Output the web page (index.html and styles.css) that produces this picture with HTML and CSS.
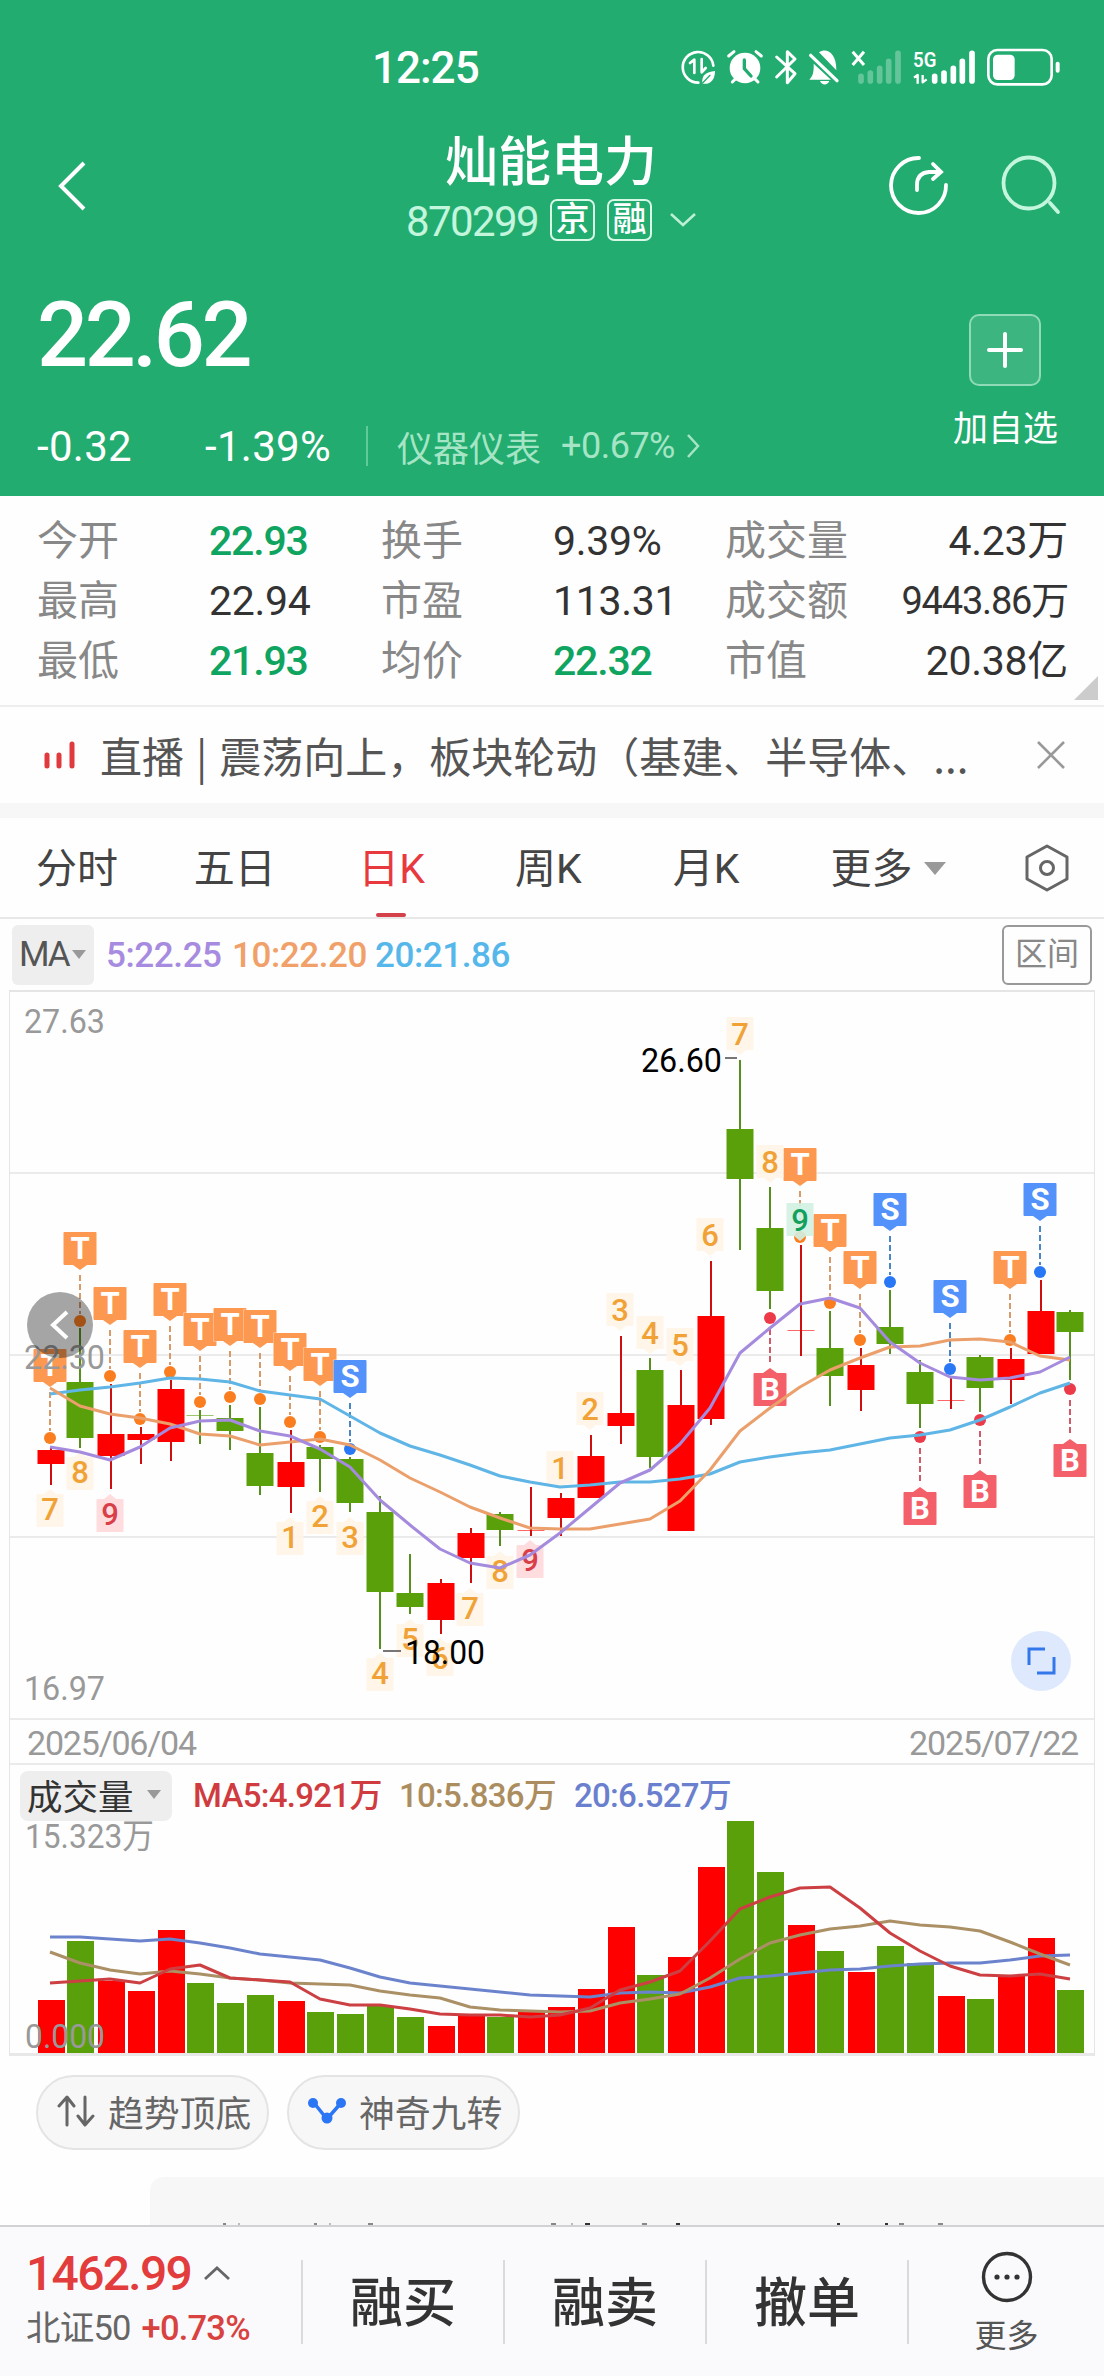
FILE: index.html
```html
<!DOCTYPE html>
<html lang="zh-CN">

<head>
    <meta charset="UTF-8">
    <meta name="viewport" content="width=device-width, initial-scale=1.0">
    <title>灿能电力 870299</title>
    <link rel="stylesheet" href="styles.css">
</head>

<body>

    <!-- Header -->
    <header class="header">
        <div class="status-bar">
            <span class="time">12:25</span>
            <svg class="status-icons" width="400" height="50" viewBox="0 40 1200 150" fill="none" stroke="#fff" stroke-linecap="round" stroke-linejoin="round">
                <!-- data saver -->
                <path d="M85 159A46 46 0 1 1 130 108" stroke-width="8" />
                <path d="M60 100l13-10v40M95 88v40l12-13" stroke-width="8" />
                <path d="M97 162C94 136 108 127 135 124C135 150 122 166 97 162Z" fill="#fff" stroke="none" />
                <path d="M98 160l22-23" stroke="#22ac70" stroke-width="4" />
                <!-- alarm -->
                <circle cx="225" cy="115" r="46" fill="#fff" stroke="none" />
                <path d="M176 79l16-13M274 79l-16-13M187 157l10-10M264 157l-10-10" stroke-width="9" />
                <path d="M223 91v26l20 22" stroke="#22ac70" stroke-width="10" />
                <!-- bluetooth -->
                <path d="M320 82l55 50-23 27V66l23 22-55 54" stroke-width="9" />
                <!-- muted bell -->
                <path d="M447 68C470 53 500 70 499 122ZM431 102L483 150H418C429 139 432 126 431 102ZM450 154H478C473 168 455 168 450 154Z" fill="#fff" stroke="none" />
                <path d="M431 71l80 77" stroke="#22ac70" stroke-width="7" />
                <path d="M422 77l79 76" stroke-width="10" />
                <!-- sim 1 -->
                <path d="M548 66l34 40M582 66l-34 40" stroke-width="9" stroke-linecap="butt" />
                <g stroke-width="17" opacity="0.3">
                    <path d="M573 140v14M601 130v24M629 116v38M656 95v59M684 71v83" />
                </g>
                <!-- sim 2 -->
                <text x="729" y="111" class="net" textLength="70" lengthAdjust="spacingAndGlyphs">5G</text>
                <path d="M732 144l11-8v26M758 136v22l12-9" stroke-width="7" stroke-linecap="butt" />
                <path d="M794 140v14M822 130v24M850 116v38M877 95v59M906 71v83" stroke-width="17" />
                <!-- battery -->
                <rect x="955" y="61" width="190" height="103" rx="27" stroke-width="8" />
                <rect x="969" y="75" width="65" height="76" rx="14" fill="#fff" stroke="none" />
                <path d="M1163 102v21" stroke-width="12" />
            </svg>
        </div>

        <div class="title-bar">
            <svg class="back" width="28" height="50" viewBox="0 0 28 50" fill="none" stroke="#fff" stroke-width="4">
                <path d="M26 2L3 25l23 23" />
            </svg>
            <div class="title">
                <h1>灿能电力</h1>
                <div class="code">
                    <span class="code-num">870299</span>
                    <span class="tag">京</span>
                    <span class="tag">融</span>
                    <svg width="26" height="16" viewBox="0 0 26 16" fill="none" stroke="#bdf0d6" stroke-width="2.5">
                        <path d="M1 2l12 11L25 2" />
                    </svg>
                </div>
            </div>
            <div class="actions">
                <svg width="62" height="62" viewBox="0 0 62 62" fill="none" stroke="#fff" stroke-width="3.8" stroke-linecap="round">
                    <path d="M32 4A27.5 27.5 0 1 0 59 31" />
                    <path d="M30 36v-5q0-12 12-13h12M46 10l8 8-8 7" />
                </svg>
                <svg width="62" height="62" viewBox="0 0 62 62" fill="none" stroke="#c4f5dd" stroke-width="3.8" stroke-linecap="round">
                    <circle cx="29" cy="29" r="25.5" />
                    <path d="M50 49l8 9" />
                </svg>
            </div>
        </div>

        <div class="quote">
            <div class="quote-left">
                <div class="price">22.62</div>
                <div class="change">
                    <span class="diff">-0.32</span>
                    <span class="percent">-1.39%</span>
                    <span class="industry">仪器仪表</span>
                    <span class="industry-percent">+0.67%</span>
                    <svg width="13" height="24" viewBox="0 0 13 24" fill="none" stroke="#a5e5c5" stroke-width="2.5">
                        <path d="M1 1l10 11L1 23" />
                    </svg>
                </div>
            </div>
            <div class="add">
                <div class="add-box">
                    <svg width="36" height="36" viewBox="0 0 36 36" stroke="#fff" stroke-width="4" stroke-linecap="round">
                        <path d="M2 18h32M18 2v32" />
                    </svg>
                </div>
                <span>加自选</span>
            </div>
        </div>
    </header>

    <!-- Key figures -->
    <section class="stats">
        <span class="label">今开</span><span class="value green">22.93</span>
        <span class="label">换手</span><span class="value">9.39%</span>
        <span class="label">成交量</span><span class="value right">4.23万</span>
        <span class="label">最高</span><span class="value">22.94</span>
        <span class="label">市盈</span><span class="value">113.31</span>
        <span class="label">成交额</span><span class="value right small">9443.86万</span>
        <span class="label">最低</span><span class="value green">21.93</span>
        <span class="label">均价</span><span class="value green">22.32</span>
        <span class="label">市值</span><span class="value right">20.38亿</span>
        <i class="corner"></i>
    </section>

    <!-- Live banner -->
    <section class="live">
        <svg width="32" height="30" viewBox="0 0 32 30" stroke="#e0393e" stroke-width="5" stroke-linecap="round">
            <path d="M3 15v11M15 15v11M28 4v22" />
        </svg>
        <p>直播<span class="bar">|</span>震荡向上，板块轮动（基建、半导体、...</p>
        <svg width="28" height="28" viewBox="0 0 28 28" stroke="#999" stroke-width="2.6">
            <path d="M1 1l26 26M27 1L1 27" />
        </svg>
    </section>

    <!-- Period tabs -->
    <nav class="tabs">
        <span class="tab">分时</span>
        <span class="tab">五日</span>
        <span class="tab active">日K</span>
        <span class="tab">周K</span>
        <span class="tab">月K</span>
        <span class="tab more">更多<i class="arrow"></i></span>
        <svg width="44" height="48" viewBox="0 0 44 48" fill="none" stroke="#666" stroke-width="3" stroke-linejoin="round">
            <path d="M22 2l20 11v22L22 46 2 35V13Z" />
            <circle cx="22" cy="24" r="6.5" />
        </svg>
    </nav>

    <div class="ma-row">
        <span class="ma-select">MA<i class="arrow small"></i></span>
        <span class="ma5">5:22.25</span>
        <span class="ma10">10:22.20</span>
        <span class="ma20">20:21.86</span>
        <span class="range">区间</span>
    </div>

    <!-- Charts -->
    <section class="chart">
        <svg id="k-chart" width="1084" height="726" viewBox="10 992 1084 726"></svg>
        <div class="dates">
            <span>2025/06/04</span>
            <span>2025/07/22</span>
        </div>
        <div class="vol-head">
            <span class="vol-select">成交量<i class="arrow small"></i></span>
            <span class="vol5">MA5:4.921万</span>
            <span class="vol10">10:5.836万</span>
            <span class="vol20">20:6.527万</span>
        </div>
        <svg id="vol-chart" width="1084" height="235" viewBox="10 1818 1084 235"></svg>
    </section>

    <div class="chips">
        <span class="chip">
            <svg width="38" height="32" viewBox="0 0 38 32" fill="none" stroke="#666" stroke-width="3" stroke-linecap="round" stroke-linejoin="round">
                <path d="M10 30V3M2 11l8-9 7 9M28 2v27M21 21l7 9 8-9" />
            </svg>
            趋势顶底
        </span>
        <span class="chip">
            <svg width="38" height="28" viewBox="0 0 38 28" fill="#2a76f5" stroke="#2a76f5" stroke-width="3.5">
                <path d="M6 6l13 16L33 6" fill="none" />
                <g stroke="none">
                    <circle cx="5" cy="6" r="5" />
                    <circle cx="19" cy="21" r="5.5" />
                    <circle cx="33" cy="6" r="5" />
                </g>
            </svg>
            神奇九转
        </span>
    </div>

    <div class="news">
        <svg width="954" height="3" viewBox="150 0 954 3" stroke="#888" stroke-width="2">
            <path d="M223 2h3M314 2h3M368 2h5M551 2h5M642 2h5M899 2h5M938 2h5" />
            <path d="M585 2h5M676 2h4M837 2h3M885 2h3" stroke="#333" />
            <path d="M238 2h2M329 2h2M571 2h2" stroke="#bbb" />
        </svg>
    </div>

    <!-- Bottom bar -->
    <footer class="bottom">
        <div class="index">
            <div class="index-price">1462.99
                <svg width="26" height="15" viewBox="0 0 26 15" fill="none" stroke="#666" stroke-width="2.8">
                    <path d="M1 13L13 2l12 11" />
                </svg>
            </div>
            <div class="index-name">北证50<span>+0.73%</span></div>
        </div>
        <div class="trade">融买</div>
        <div class="trade">融卖</div>
        <div class="trade">撤单</div>
        <div class="bottom-more">
            <svg width="52" height="52" viewBox="0 0 52 52">
                <circle cx="26" cy="26" r="23.5" fill="none" stroke="#333" stroke-width="3.4" />
                <g fill="#333">
                    <circle cx="16" cy="26" r="2.6" />
                    <circle cx="26" cy="26" r="2.6" />
                    <circle cx="36" cy="26" r="2.6" />
                </g>
            </svg>
            <span>更多</span>
        </div>
    </footer>

    <script src="chart.js"></script>
</body>

</html>
```
FILE: styles.css
```css
* {
    margin: 0;
    padding: 0;
    box-sizing: border-box;
}

body {
    width: 1104px;
    height: 2376px;
    overflow: hidden;
    font-family: Roboto, "Noto Sans CJK SC", sans-serif;
    background: #fefefe;
    color: #333;
}

svg {
    display: block;
    flex-shrink: 0;
}

/* Header */
.header {
    height: 496px;
    background: #22ac70;
    color: white;
}

.status-bar {
    display: flex;
    height: 132px;
    padding-top: 43px;
    padding-left: 372px;
}

.time {
    width: 298px;
    font-size: 44px;
    line-height: 51px;
    letter-spacing: -1px;
    font-weight: 500;
}

.net {
    font-size: 62px;
    font-weight: 600;
    fill: white;
    stroke: none;
}

.title-bar {
    display: flex;
    height: 142px;
}

.back {
    margin: 29px 0 0 58px;
}

.title {
    width: 670px;
    margin-left: 130px;
    text-align: center;
}

.title h1 {
    font-size: 53px;
    font-weight: 500;
    line-height: 62px;
}

.code {
    display: flex;
    align-items: center;
    justify-content: center;
    height: 50px;
    margin-top: 1px;
    gap: 12px;
}

.code-num {
    padding-top: 3px;
    font-size: 42px;
    letter-spacing: -1.6px;
    color: #c4f5dd;
}

.tag {
    width: 45px;
    height: 42px;
    border: 2px solid #d8f8e8;
    border-radius: 7px;
    font-size: 34px;
    font-weight: 500;
    line-height: 37px;
}

.code svg {
    margin-left: 6px;
}

.actions {
    display: flex;
    gap: 51px;
    margin-top: 22px;
    margin-left: 1px;
}

.quote {
    display: flex;
    justify-content: space-between;
    padding: 0 46px 0 37px;
}

.price {
    height: 122px;
    font-size: 90px;
    font-weight: 500;
    line-height: 124px;
    letter-spacing: -3.5px;
}

.change {
    display: flex;
    align-items: center;
    height: 42px;
    margin-top: 29px;
    font-size: 42px;
    letter-spacing: 0.3px;
}

.diff {
    width: 168px;
}

.percent {
    width: 163px;
    height: 40px;
    line-height: 42px;
    border-right: 2px solid #5fcb98;
}

.industry {
    width: 193px;
    padding-left: 29px;
    font-size: 36px;
    letter-spacing: 0;
    color: #a5e5c5;
    white-space: nowrap;
}

.industry-percent {
    width: 126px;
    font-size: 36px;
    letter-spacing: -0.5px;
    color: #a5e5c5;
}

.add {
    display: flex;
    flex-direction: column;
    align-items: center;
    padding-top: 40px;
    font-size: 35px;
    line-height: 50px;
}

.add-box {
    display: flex;
    align-items: center;
    justify-content: center;
    width: 72px;
    height: 72px;
    margin-bottom: 19px;
    border: 2px solid #90dbb7;
    border-radius: 10px;
    background: #3cb580;
}

/* Key figures */
.stats {
    position: relative;
    display: grid;
    grid-template-columns: 172px 172px 172px 172px 140px 1fr;
    grid-auto-rows: 60px;
    height: 211px;
    padding: 15px 36px 0 37px;
    border-bottom: 2px solid #eee;
    font-size: 41px;
    line-height: 60px;
    white-space: nowrap;
}

.label {
    color: #888;
}

.value {
    letter-spacing: -0.3px;
}

.right {
    text-align: right;
}

.small {
    font-size: 38px;
    letter-spacing: -1.2px;
}

.green {
    color: #0fa460;
    font-weight: 500;
    letter-spacing: -1.2px;
}

.corner {
    position: absolute;
    right: 6px;
    bottom: 5px;
    border-left: 24px solid transparent;
    border-bottom: 24px solid #ccc;
}

/* Live banner */
.live {
    display: flex;
    align-items: center;
    height: 96px;
    padding: 0 39px 0 44px;
    color: #555;
}

.live p {
    flex: 1;
    margin-left: 24px;
    font-size: 42px;
    line-height: 60px;
    white-space: nowrap;
    font-family: "Noto Sans CJK SC", sans-serif;
}

.live .bar {
    margin: 0 12px;
}

/* Tabs */
.tabs {
    display: flex;
    align-items: center;
    height: 116px;
    padding: 0 35px 0 36px;
    border-top: 15px solid #f7f7f7;
    border-bottom: 2px solid #e8e8e8;
    font-size: 41px;
    color: #444;
}

.tab {
    position: relative;
    width: 158px;
    padding-top: 2px;
    line-height: 60px;
    white-space: nowrap;
}

.tab:nth-child(2) {
    width: 165px;
}

.tab:nth-child(3) {
    width: 157px;
}

.tab.active {
    color: #e8393f;
}

.tab.active::after {
    content: "";
    position: absolute;
    left: 18px;
    bottom: -18px;
    width: 30px;
    height: 4px;
    border-radius: 2px;
    background: #d5414a;
}

.tab.more {
    display: flex;
    align-items: center;
    width: 195px;
}

.arrow {
    margin-left: 12px;
    border: 11px solid transparent;
    border-top: 13px solid #999;
    border-bottom: 0;
}

.arrow.small {
    margin-left: 3px;
    border-width: 9px 7px 0;
}

.ma-row {
    display: flex;
    align-items: center;
    height: 71px;
    padding: 0 12px;
    font-size: 35px;
    letter-spacing: 0;
}

.ma-select {
    display: flex;
    align-items: center;
    width: 82px;
    height: 60px;
    padding-left: 7px;
    border-radius: 6px;
    background: #eee;
    color: #555;
    letter-spacing: -2px;
}

.ma5 {
    width: 126px;
    margin-left: 12px;
    color: #a78be0;
}

.ma10 {
    width: 143px;
    color: #f0a068;
}

.ma20 {
    flex: 1;
    color: #55b7ea;
}

.ma5,
.ma10,
.ma20 {
    padding-top: 2px;
    font-weight: 500;
    letter-spacing: -0.4px;
}

.range {
    width: 90px;
    height: 60px;
    border: 2px solid #999;
    border-radius: 6px;
    font-size: 32px;
    line-height: 55px;
    text-align: center;
    color: #888;
}

/* Charts */
.chart {
    margin: 0 9px;
    border: 1px solid #e5e5e5;
    border-top-width: 2px;
    border-bottom: 3px solid #e8e8e8;
}

.dates {
    display: flex;
    justify-content: space-between;
    height: 47px;
    padding: 0 16px 0 17px;
    border-top: 2px solid #ebebeb;
    border-bottom: 2px solid #ebebeb;
    font-size: 34px;
    line-height: 46px;
    letter-spacing: -1.2px;
    color: #999;
}

.vol-head {
    display: flex;
    align-items: center;
    height: 53px;
    padding: 8px 0 0 10px;
    font-size: 33px;
    letter-spacing: -0.6px;
    white-space: nowrap;
}

.vol-select {
    display: flex;
    align-items: center;
    width: 152px;
    height: 50px;
    margin-right: 21px;
    padding: 0 0 2px 7px;
    border-radius: 8px;
    background: #eee;
    font-size: 35.5px;
    letter-spacing: 0;
}

.vol-select .arrow {
    margin-left: 13px;
}

.vol5,
.vol10,
.vol20 {
    padding-bottom: 6px;
    font-weight: 500;
    letter-spacing: -0.7px;
}

.vol5 {
    width: 206px;
    color: #d03b3f;
}

.vol10 {
    width: 175px;
    color: #ab8d60;
}

.vol20 {
    color: #6a80cf;
}

.axis {
    font-size: 34px;
    fill: #999;
}

.mark {
    font-size: 33px;
    fill: black;
}

.flag {
    font-size: 31px;
    font-weight: 700;
    fill: white;
    text-anchor: middle;
}

.nine {
    font-size: 31px;
    font-weight: 500;
    text-anchor: middle;
}

.line {
    fill: none;
    stroke-width: 3;
    stroke-linejoin: round;
}

/* Chips and news card */
.chips {
    display: flex;
    gap: 18px;
    height: 121px;
    padding: 19px 0 0 36px;
}

.chip {
    display: flex;
    align-items: center;
    gap: 13px;
    width: 233px;
    height: 75px;
    padding: 0 0 4px 19px;
    border: 2px solid #e4e4e4;
    border-radius: 38px;
    background: #f7f7f7;
    font-size: 35.8px;
    color: #666;
    white-space: nowrap;
}

.news {
    height: 48px;
    margin-left: 150px;
    padding-top: 45px;
    border-radius: 14px 0 0 0;
    background: #f7f7f7;
}

/* Bottom bar */
.bottom {
    display: flex;
    height: 151px;
    padding: 33px 0 0;
    border-top: 2px solid #d2d2d6;
    background: #fafafc;
}

.index {
    width: 301px;
    padding-left: 26px;
    white-space: nowrap;
}

.index-price {
    display: flex;
    align-items: center;
    gap: 13px;
    height: 26px;
    font-size: 48px;
    font-weight: 500;
    letter-spacing: -1.7px;
    color: #e33c3c;
}

.index-name {
    margin-top: 17px;
    font-size: 34.5px;
    line-height: 50px;
    letter-spacing: -0.8px;
    color: #666;
}

.index-name span {
    margin-left: 11px;
    font-weight: 500;
    color: #d8423f;
}

.trade {
    width: 202px;
    height: 84px;
    border-left: 2px solid #dadadc;
    font-size: 53px;
    font-weight: 500;
    line-height: 88px;
    text-align: center;
}

.bottom-more {
    flex: 1;
    display: flex;
    flex-direction: column;
    align-items: center;
    height: 84px;
    border-left: 2px solid #dadadc;
    font-size: 32px;
    line-height: 50px;
    color: #555;
}

.bottom-more svg {
    margin: -9px 0 8px;
}
```
FILE: chart.js
```js
const RED = '#ff0000';
const GREEN = '#5aa00a';

// [up, high, bodyTop, bodyBottom, low, volumeTop]
const candles = [
    [1, 1448, 1450, 1464, 1485, 2000],
    [0, 1328, 1382, 1438, 1448, 1941],
    [1, 1384, 1434, 1456, 1489, 1981],
    [1, 1427, 1434, 1440, 1464, 1991],
    [1, 1380, 1389, 1442, 1461, 1930],
    [0, 1410, 1415, 1416, 1444, 1983],
    [0, 1405, 1418, 1431, 1450, 2003],
    [0, 1407, 1453, 1486, 1495, 1995],
    [1, 1430, 1462, 1487, 1513, 2001],
    [0, 1445, 1447, 1459, 1492, 2012],
    [0, 1457, 1459, 1503, 1512, 2014],
    [0, 1496, 1512, 1592, 1649, 2006],
    [0, 1554, 1593, 1607, 1614, 2017],
    [1, 1579, 1583, 1620, 1634, 2026],
    [1, 1528, 1533, 1558, 1583, 2016],
    [0, 1512, 1514, 1530, 1546, 2017],
    [1, 1487, 1530, 1531, 1536, 2012],
    [1, 1493, 1498, 1518, 1536, 2007],
    [1, 1435, 1456, 1498, 1498, 1989],
    [1, 1336, 1413, 1426, 1444, 1927],
    [0, 1358, 1370, 1457, 1468, 1975],
    [1, 1370, 1405, 1531, 1531, 1957],
    [1, 1261, 1316, 1419, 1425, 1867],
    [0, 1060, 1129, 1179, 1250, 1821],
    [0, 1187, 1228, 1291, 1309, 1872],
    [1, 1245, 1330, 1331, 1356, 1925],
    [0, 1311, 1348, 1376, 1406, 1951],
    [1, 1348, 1365, 1390, 1411, 1972],
    [0, 1290, 1327, 1344, 1354, 1946],
    [0, 1360, 1372, 1404, 1428, 1963],
    [1, 1377, 1400, 1401, 1409, 1996],
    [0, 1355, 1357, 1388, 1412, 1999],
    [1, 1348, 1359, 1380, 1404, 1976],
    [1, 1280, 1311, 1354, 1354, 1938],
    [0, 1310, 1312, 1332, 1380, 1990]
];

const ma5 = [1447, 1452, 1460, 1447, 1428, 1421, 1420, 1431, 1436, 1449, 1467, 1500, 1525, 1549, 1563, 1568, 1555, 1533, 1508, 1483, 1470, 1444, 1408, 1353, 1328, 1304, 1298, 1308, 1342, 1363, 1377, 1380, 1378, 1372, 1357];
const ma10 = [1388, 1406, 1414, 1418, 1424, 1434, 1436, 1445, 1442, 1439, 1445, 1460, 1478, 1492, 1507, 1518, 1528, 1529, 1529, 1524, 1519, 1501, 1470, 1431, 1408, 1387, 1370, 1358, 1347, 1346, 1340, 1339, 1342, 1356, 1360];
const ma20 = [1394, 1390, 1387, 1383, 1378, 1379, 1382, 1391, 1395, 1399, 1416, 1433, 1446, 1455, 1465, 1476, 1482, 1487, 1485, 1482, 1482, 1479, 1474, 1462, 1457, 1453, 1450, 1444, 1438, 1435, 1430, 1420, 1407, 1393, 1383];

const vol5 = [1983, 1981, 1979, 1983, 1969, 1965, 1978, 1980, 1982, 1999, 2005, 2005, 2009, 2014, 2015, 2015, 2017, 2015, 2008, 1990, 1982, 1971, 1941, 1909, 1897, 1888, 1887, 1908, 1933, 1951, 1966, 1975, 1976, 1974, 1979];
const vol10 = [1952, 1963, 1970, 1974, 1971, 1974, 1978, 1980, 1983, 1984, 1985, 1991, 1995, 1998, 2007, 2010, 2011, 2012, 2011, 2003, 1999, 1994, 1978, 1959, 1943, 1935, 1929, 1926, 1921, 1925, 1927, 1931, 1942, 1954, 1965];
const vol20 = [1937, 1937, 1939, 1941, 1939, 1943, 1948, 1954, 1957, 1960, 1968, 1977, 1983, 1986, 1989, 1992, 1995, 1996, 1997, 1993, 1992, 1993, 1987, 1978, 1976, 1973, 1970, 1969, 1966, 1964, 1963, 1963, 1960, 1956, 1955];

// [index, letter, dot y]
const flags = [
    [0, 'T', 1438], [1, 'T', 1321], [2, 'T', 1376], [3, 'T', 1419], [4, 'T', 1372], [5, 'T', 1402],
    [6, 'T', 1397], [7, 'T', 1399], [8, 'T', 1422], [9, 'T', 1437], [10, 'S', 1449],
    [24, 'B', 1318], [25, 'T', 1237], [26, 'T', 1303], [27, 'T', 1340], [28, 'S', 1282],
    [29, 'B', 1437], [30, 'S', 1369], [31, 'B', 1420], [32, 'T', 1340], [33, 'S', 1272], [34, 'B', 1389]
];

// [index, number, box top, above candle]
const nines = [
    [0, 7, 1494, 0], [1, 8, 1457, 0], [2, 9, 1499, 0], [8, 1, 1522, 0], [9, 2, 1501, 0], [10, 3, 1522, 0],
    [11, 4, 1658, 0], [12, 5, 1624, 0], [13, 6, 1643, 0], [14, 7, 1593, 0], [15, 8, 1556, 0], [16, 9, 1545, 0],
    [17, 1, 1451, 1], [18, 2, 1392, 1], [19, 3, 1293, 1], [20, 4, 1316, 1], [21, 5, 1328, 1], [22, 6, 1218, 1],
    [23, 7, 1017, 1], [24, 8, 1145, 1], [25, 9, 1203, 1]
];

const flagColors = {
    T: ['#fd9850', '#fa7d20', '#d89a68'],
    S: ['#5292fa', '#2878f5', '#4a85c5'],
    B: ['#f4606a', '#ec3a48', '#cf5a68']
};

function xOf(i) {
    return 50 + 30 * i;
}

function drawLine(values, color) {
    const points = values.map((y, i) => `${xOf(i)},${y}`).join(' ');
    return `<polyline class="line" points="${points}" stroke="${color}"/>`;
}

function drawCandle(c, i) {
    const [up, high, top, bottom, low] = c;
    const x = xOf(i) + (up ? 1 : 0);
    const h = bottom - top;
    const color = up ? RED : GREEN;
    return `<path d="M${x} ${high}V${low}" stroke="${up ? '#cc1010' : '#568f1e'}" stroke-width="2"/>
        <rect x="${x - 13.5}" y="${top}" width="27" height="${h}" fill="${color}" opacity="${h < 2 ? 0.6 : 1}"/>`;
}

function drawFlag(f) {
    const [i, letter, dot] = f;
    const x = xOf(i);
    const [box, dotColor, dash] = flagColors[letter];
    const below = letter === 'B';
    const top = below ? dot + 55 : dot - 89;
    const tip = below
        ? `M${x - 7} ${top}l7 -5l7 5Z`
        : `M${x - 7} ${top + 33}l7 5l7 -5Z`;
    const from = below ? dot + 11 : top + 43;
    const to = below ? top - 8 : dot - 7;
    return `<path d="M${x} ${from}V${to}" stroke="${dash}" stroke-width="2" stroke-dasharray="6 3"/>
        <circle cx="${x}" cy="${dot}" r="6" fill="${dotColor}"/>
        <rect x="${x - 17}" y="${top - 0.5}" width="34" height="34" rx="1" fill="#fff" opacity="0.6"/>
        <rect x="${x - 16.5}" y="${top}" width="33" height="33" rx="1" fill="${box}"/>
        <path d="${tip}" fill="${box}"/>
        <text class="flag" x="${x}" y="${top + 27}">${letter}</text>`;
}

function drawNine(n) {
    const [i, num, top, above] = n;
    const x = xOf(i);
    let bg = '#fff4e6';
    let color = '#f0a236';
    if (num === 9) {
        bg = above ? '#d2f1e2' : '#ffd9da';
        color = above ? '#12a05c' : '#d83f48';
    }
    const tip = above
        ? `M${x - 6} ${top + 33}l6 5l6 -5Z`
        : `M${x - 6} ${top}l6 -5l6 5Z`;
    return `<rect x="${x - 13.5}" y="${top}" width="27" height="33" rx="1" fill="${bg}" opacity="0.9"/>
        <path d="${tip}" fill="${bg}" opacity="0.9"/>
        <text class="nine" x="${x}" y="${top + (above ? 28 : 26)}" fill="${color}">${num}</text>`;
}

function label(cls, x, y, width, text) {
    return `<text class="${cls}" x="${x}" y="${y}" textLength="${width}" lengthAdjust="spacingAndGlyphs">${text}</text>`;
}

document.getElementById('k-chart').innerHTML =
    '<path d="M10 1173H1094M10 1355H1094M10 1537H1094" stroke="#ebebeb" stroke-width="2"/>' +
    flags.map(drawFlag).join('') +
    nines.map(drawNine).join('') +
    candles.map(drawCandle).join('') +
    drawLine(ma20, '#5fb5e5') +
    drawLine(ma10, '#eb9f6b') +
    drawLine(ma5, '#a58bdd') +
    label('axis', 24, 1033, 81, '27.63') +
    label('axis', 24, 1369, 81, '22.30') +
    label('axis', 24, 1700, 81, '16.97') +
    '<path d="M725 1058h12M383 1651h18" stroke="#777" stroke-width="2"/>' +
    label('mark', 641, 1072, 81, '26.60') +
    label('mark', 405, 1664, 80, '18.00') +
    // previous page button
    '<circle cx="60" cy="1325" r="33" fill="#000" opacity="0.35"/>' +
    '<path d="M67 1312L53 1325L67 1338" fill="none" stroke="#fff" stroke-width="4"/>' +
    // fullscreen button
    '<circle cx="1041" cy="1661" r="30" fill="#dfe9fd"/>' +
    '<path d="M1029 1665V1649H1045M1037 1673H1054V1657" fill="none" stroke="#3278ea" stroke-width="3"/>';

document.getElementById('vol-chart').innerHTML =
    candles.map((c, i) => `<rect x="${xOf(i) - 13 + (c[0] ? 1 : 0)}" y="${c[5]}" width="27" height="${2053 - c[5]}" fill="${c[0] ? RED : GREEN}"/>`).join('') +
    drawLine(vol20, '#6b83cc') +
    drawLine(vol10, '#ab9065') +
    drawLine(vol5, '#cc3f42') +
    label('axis', 25, 1848, 129, '15.323万') +
    label('axis', 25, 2048, 80, '0.000');
```
